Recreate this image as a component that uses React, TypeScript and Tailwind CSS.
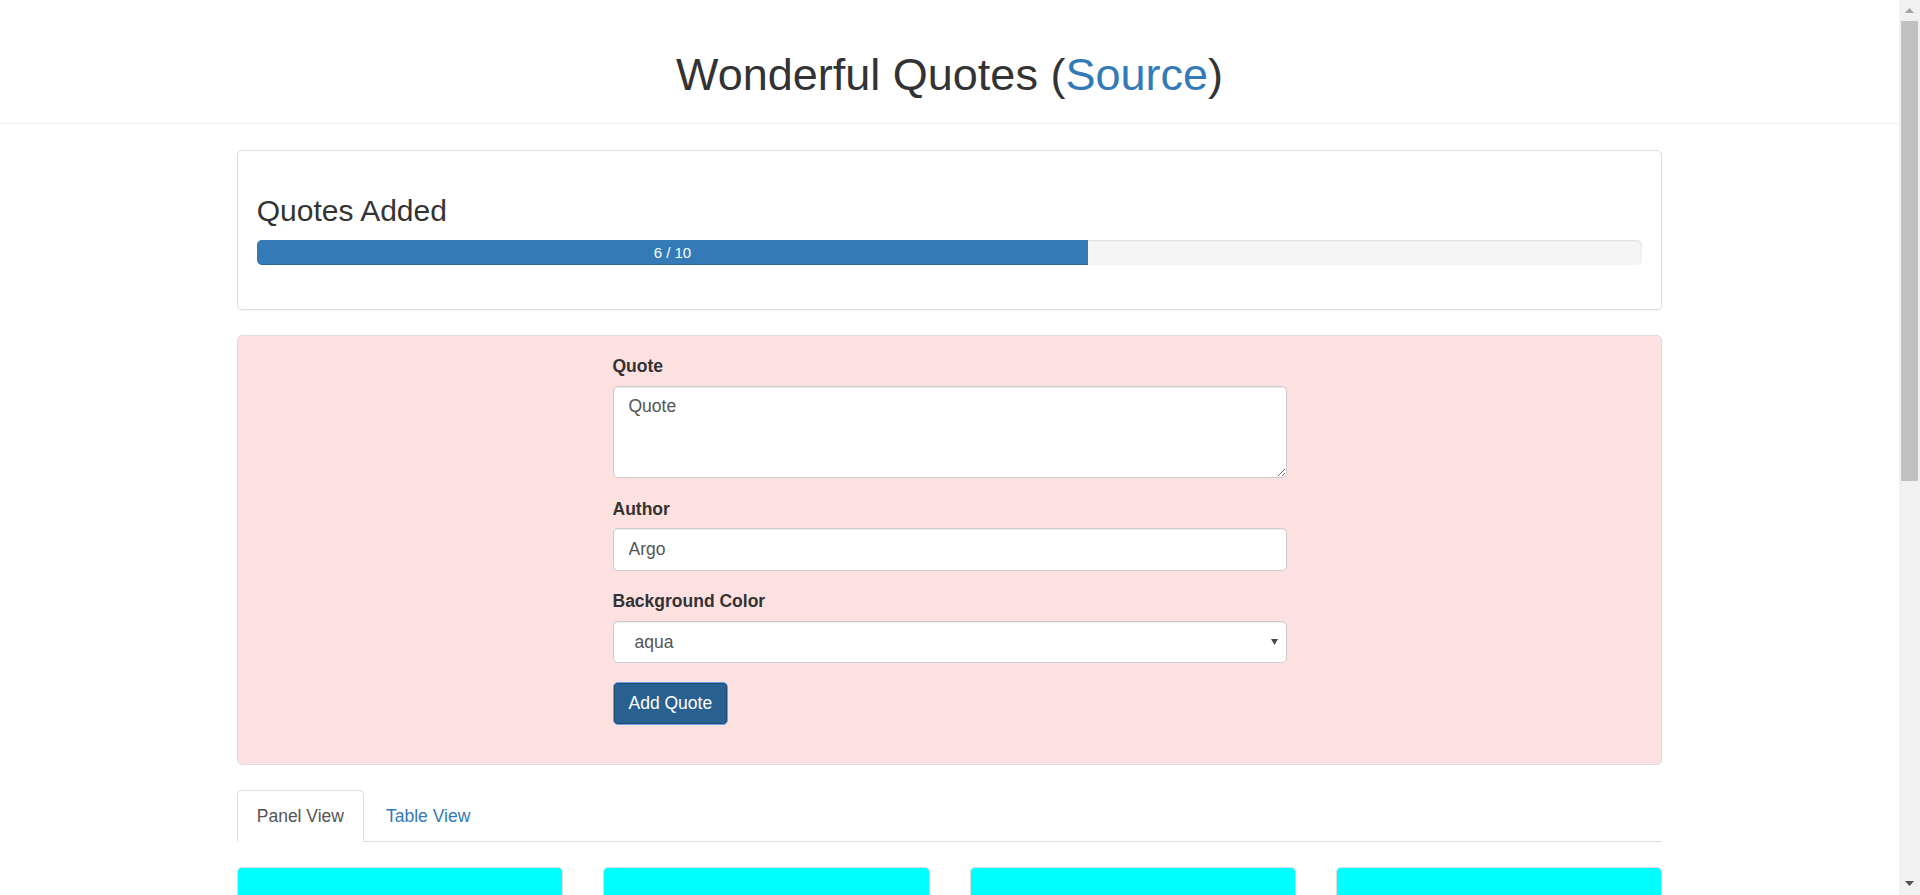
import React from "react";

export default function App() {
  return (
    <div className="flex h-[895px] w-[1920px] overflow-hidden bg-white font-['Liberation_Sans',Arial,sans-serif] text-[#333]">
      <div className="min-w-0 flex-1">
        <header className="border-b border-[#eee] pt-[50px] pb-[23px]">
          <h1 className="text-center text-[45px] font-normal leading-[49.5px] text-[#333]">
            Wonderful Quotes (<a className="text-[#337ab7]">Source</a>)
          </h1>
        </header>

        <main className="mx-auto mt-[26px] w-[1425px]">
          {/* Progress panel */}
          <section className="rounded-[5px] border border-[#ddd] bg-white px-[18.75px] pt-[18.75px] pb-[18.75px] shadow-[0_1px_1px_rgba(0,0,0,0.05)]">
            <h3 className="mt-[25px] mb-[12.5px] text-[30px] font-normal leading-[33px] text-[#333]">
              Quotes Added
            </h3>
            <div className="mb-[25px] h-[25px] overflow-hidden rounded-[5px] bg-[#f5f5f5] shadow-[inset_0_1px_2px_rgba(0,0,0,0.1)]">
              <div className="h-full w-[60%] bg-[#337ab7] text-center text-[15px] leading-[25px] text-white shadow-[inset_0_-1px_0_rgba(0,0,0,0.15)]">
                6 / 10
              </div>
            </div>
          </section>

          {/* Form panel */}
          <section className="mt-[25px] rounded-[5px] border border-[#ddd] bg-[#fde0e0] p-[18.75px]">
            <form className="mx-auto w-[674px] text-[17.5px]" onSubmit={(e) => e.preventDefault()}>
              <div className="mb-[18.75px]">
                <label className="mb-[6.25px] block font-bold leading-[25px] text-[#333]">Quote</label>
                <textarea
                  defaultValue="Quote"
                  className="block h-[92.5px] w-full rounded-[5px] border border-[#ccc] bg-white px-[15px] py-[7.5px] text-[17.5px] leading-[25px] text-[#555] shadow-[inset_0_1px_1px_rgba(0,0,0,0.075)] outline-none"
                />
              </div>
              <div className="mb-[18.75px]">
                <label className="mb-[6.25px] block font-bold leading-[25px] text-[#333]">Author</label>
                <input
                  defaultValue="Argo"
                  className="block h-[42.5px] w-full rounded-[5px] border border-[#ccc] bg-white px-[15px] text-[17.5px] text-[#555] shadow-[inset_0_1px_1px_rgba(0,0,0,0.075)] outline-none"
                />
              </div>
              <div className="mb-[18.75px]">
                <label className="mb-[6.25px] block font-bold leading-[25px] text-[#333]">Background Color</label>
                <div className="flex h-[42.5px] w-full items-center justify-between rounded-[5px] border border-[#ccc] bg-white pr-[8px] pl-[21px] text-[#555] shadow-[inset_0_1px_1px_rgba(0,0,0,0.075)]">
                  <span>aqua</span>
                  <svg width="7" height="6" viewBox="0 0 7 6">
                    <polygon points="0,0 7,0 3.5,6" fill="#4a4a4a" />
                  </svg>
                </div>
              </div>
              <div className="mb-[20px]">
                <button
                  type="submit"
                  className="h-[43.5px] rounded-[5px] border border-[#6e9fea] bg-[#286090] px-[15px] text-[17.5px] leading-[25px] text-white shadow-[inset_0_0_0_1px_#204d74]"
                >
                  Add Quote
                </button>
              </div>
            </form>
          </section>

          {/* Tabs */}
          <ul className="mt-[25px] flex border-b border-[#ddd] text-[17.5px]">
            <li className="-mb-px mr-[2.5px]">
              <a className="block rounded-t-[5px] border border-[#ddd] border-b-white bg-white px-[18.75px] py-[12.5px] leading-[25px] text-[#555]">
                Panel View
              </a>
            </li>
            <li className="-mb-px mr-[2.5px]">
              <a className="block rounded-t-[5px] border border-transparent px-[18.75px] py-[12.5px] leading-[25px] text-[#337ab7]">
                Table View
              </a>
            </li>
          </ul>

          {/* Cards */}
          <div className="mt-[25px] grid grid-cols-4 gap-x-[40px]">
            {[0, 1, 2, 3].map((i) => (
              <div key={i} className="h-[200px] rounded-[5px] border border-[#ddd] bg-[#00ffff]" />
            ))}
          </div>
        </main>
      </div>

      {/* Scrollbar */}
      <div className="flex w-[21px] flex-col bg-[#f1f1f1]">
        <div className="flex h-[21px] items-center justify-center">
          <svg width="9" height="5" viewBox="0 0 9 5">
            <polygon points="0,5 9,5 4.5,0" fill="#a3a3a3" />
          </svg>
        </div>
        <div className="mx-[2px] h-[460px] bg-[#c1c1c1]" />
        <div className="flex-1" />
        <div className="flex h-[24px] items-center justify-center">
          <svg width="9" height="5" viewBox="0 0 9 5">
            <polygon points="0,0 9,0 4.5,5" fill="#505050" />
          </svg>
        </div>
      </div>
    </div>
  );
}
